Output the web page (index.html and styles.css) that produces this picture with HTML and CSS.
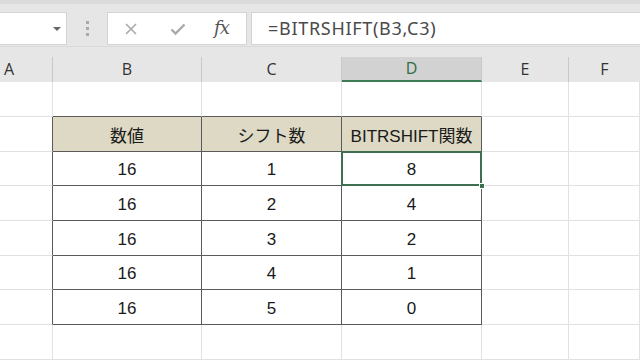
FILE: index.html
```html
<!DOCTYPE html>
<html lang="ja">
<head>
<meta charset="utf-8">
<link rel="stylesheet" href="styles.css">
</head>
<body>
<div class="app">
  <div class="toolbar">
    <div class="namebox"><span class="caret"></span></div>
    <div class="grip"><i></i><i></i><i></i></div>
    <div class="fxbox">
      <svg class="ico" width="14" height="14" viewBox="0 0 14 14"><path d="M2 2L12 12M12 2L2 12" stroke="#a9a9a9" stroke-width="1.6" fill="none"/></svg>
      <svg class="ico" width="16" height="14" viewBox="0 0 16 14"><path d="M1.5 7.5L5.5 11.5L14.5 2.5" stroke="#a9a9a9" stroke-width="2.4" fill="none"/></svg>
      <span class="fx">fx</span>
    </div>
    <div class="formula">=BITRSHIFT(B3,C3)</div>
  </div>
  <div class="colheads">
    <div class="ch">A</div>
    <div class="ch">B</div>
    <div class="ch">C</div>
    <div class="ch sel">D</div>
    <div class="ch">E</div>
    <div class="ch last">F</div>
  </div>
  <div class="sheet">
    <div class="c"></div><div class="c tb"></div><div class="c tb"></div><div class="c tb"></div><div class="c"></div><div class="c"></div>

    <div class="c tl"></div><div class="c t th">数値</div><div class="c t th">シフト数</div><div class="c t th">BITRSHIFT関数</div><div class="c"></div><div class="c"></div>

    <div class="c tl"></div><div class="c t">16</div><div class="c t">1</div><div class="c t active">8<span class="handle"></span></div><div class="c"></div><div class="c"></div>

    <div class="c tl"></div><div class="c t">16</div><div class="c t">2</div><div class="c t">4</div><div class="c"></div><div class="c"></div>

    <div class="c tl"></div><div class="c t">16</div><div class="c t">3</div><div class="c t">2</div><div class="c"></div><div class="c"></div>

    <div class="c tl"></div><div class="c t">16</div><div class="c t">4</div><div class="c t">1</div><div class="c"></div><div class="c"></div>

    <div class="c tl"></div><div class="c t">16</div><div class="c t">5</div><div class="c t">0</div><div class="c"></div><div class="c"></div>

    <div class="c"></div><div class="c"></div><div class="c"></div><div class="c"></div><div class="c"></div><div class="c"></div>
  </div>
</div>
</body>
</html>
```

FILE: styles.css
```css
* { box-sizing: border-box; }
html, body { margin: 0; padding: 0; }
body {
  width: 640px;
  height: 360px;
  overflow: hidden;
  background: #ffffff;
  font-family: "Noto Sans", "Open Sans", sans-serif;
}
.app { width: 640px; height: 360px; overflow: hidden; }

.toolbar {
  height: 47px;
  background: #e6e6e6;
  border-top: 4px solid #dbdbdb;
  padding-top: 8px;
  display: flex;
  align-items: flex-start;
  border-bottom: 1px solid #dadada;
}
.namebox {
  width: 67px;
  height: 33px;
  background: #fff;
  border: 1px solid #d4d4d4;
  border-left: none;
  position: relative;
}
.caret {
  position: absolute;
  left: 53px;
  top: 14px;
  width: 0;
  height: 0;
  border-left: 4px solid transparent;
  border-right: 4px solid transparent;
  border-top: 4px solid #666;
}
.grip {
  width: 40px;
  height: 33px;
  display: flex;
  flex-direction: column;
  align-items: center;
  justify-content: center;
  gap: 3px;
}
.grip i {
  display: block;
  width: 3px;
  height: 3px;
  background: #aaa;
}
.fxbox {
  width: 140px;
  height: 33px;
  background: #fff;
  border: 1px solid #d4d4d4;
  display: flex;
  align-items: center;
  padding-left: 16px;
}
.fxbox .ico:nth-child(1) { margin-right: 32px; }
.fxbox .ico:nth-child(2) { margin-right: 28px; }
.fx {
  font-family: "DejaVu Serif", "Liberation Serif", serif;
  font-style: italic;
  font-size: 18px;
  color: #555;
  letter-spacing: -1px;
  line-height: 1;
  margin-top: -2px;
}
.formula {
  margin-left: 4px;
  flex: 1;
  height: 33px;
  background: #fff;
  border: 1px solid #d4d4d4;
  border-right: none;
  padding-left: 16px;
  font-size: 18px;
  line-height: 30px;
  color: #4a4a4a;
  letter-spacing: 0.7px;
}

.colheads {
  height: 35px;
  background: #e6e6e6;
  padding-top: 10px;
  display: grid;
  grid-template-columns: 53px 149px 140px 140px 87px 71px;
}
.ch {
  height: 25px;
  border-right: 1px solid #c8c8c8;
  font-family: "Open Sans", "Noto Sans", sans-serif;
  font-size: 16px;
  color: #333;
  text-align: center;
  line-height: 24px;
}
.ch:first-child { text-align: left; padding-left: 4px; }
.ch.last { border-right: none; }
.ch.sel {
  background: #d2d2d2;
  color: #2f6b45;
  border-bottom: 2px solid #3f7b55;
  line-height: 23px;
}

.sheet {
  display: grid;
  grid-template-columns: 53px 149px 140px 140px 87px 71px;
  grid-template-rows: 35px 35px 34px 35px 35px 34px 35px 35px;
}
.c {
  border-right: 1px solid #e1e1e1;
  border-bottom: 1px solid #e1e1e1;
  font-family: "Liberation Sans", "Noto Sans CJK JP", sans-serif;
  font-size: 17px;
  color: #1a1a1a;
  display: flex;
  align-items: center;
  justify-content: center;
  padding-top: 3px;
  position: relative;
}
.c.tb { border-bottom-color: #5a5a5a; }
.c.tl { border-right-color: #5a5a5a; }
.c.t { border-right-color: #5a5a5a; border-bottom-color: #5a5a5a; }
.c.th { background: #ddd9c4; padding-top: 1px; }
.c.active::after {
  content: "";
  position: absolute;
  left: -1px;
  top: -1px;
  right: -1px;
  bottom: -1px;
  border: 2px solid #3d6f50;
}
.handle {
  position: absolute;
  right: -4px;
  bottom: -4px;
  width: 6px;
  height: 6px;
  background: #3d6f50;
  border: 1px solid #fff;
  z-index: 2;
}
```
